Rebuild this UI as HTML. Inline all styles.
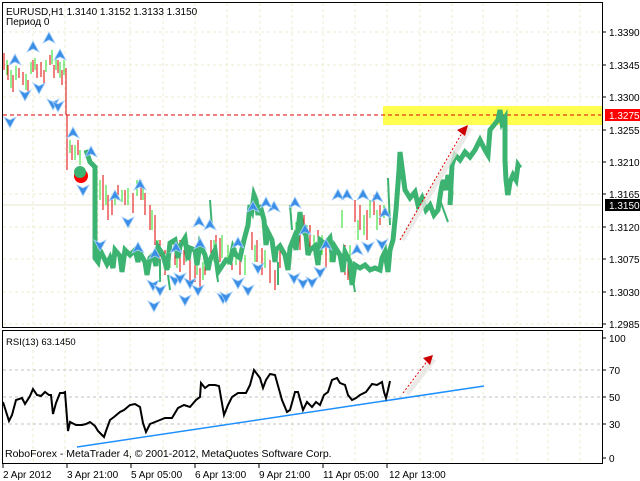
<!DOCTYPE html>
<html><head><meta charset="utf-8"><style>
html,body{margin:0;padding:0;background:#fff;width:640px;height:481px;overflow:hidden}
svg{display:block}
text{font-family:"Liberation Sans",sans-serif;font-size:10px;fill:#000}
</style></head><body>
<svg width="640" height="481" viewBox="0 0 640 481" xmlns="http://www.w3.org/2000/svg">
<defs>
<g id="up"><path d="M0,-6 L6,5 L0,2 L-6,5 Z" fill="#3a8ee6" stroke="#a8d0f8" stroke-width="0.8"/></g>
<g id="dn"><path d="M0,6 L6,-5 L0,-2 L-6,-5 Z" fill="#3a8ee6" stroke="#a8d0f8" stroke-width="0.8"/></g>
</defs>
<g stroke="#ecebd2" stroke-dasharray="3,3" stroke-width="1">
<path d="M33,3V327M65,3V327M98,3V327M130,3V327M163,3V327M195,3V327M227,3V327M260,3V327M292,3V327M323,3V327M355,3V327M387,3V327M420,3V327M452,3V327M483,3V327M517,3V327M548,3V327M580,3V327"/>
<path d="M3,32H601M3,65H601M3,97H601M3,130H601M3,162H601M3,194H601M3,227H601M3,259H601M3,292H601M3,324H601"/>
<path d="M33,332V463M65,332V463M98,332V463M130,332V463M163,332V463M195,332V463M227,332V463M260,332V463M292,332V463M323,332V463M355,332V463M387,332V463M420,332V463M452,332V463M483,332V463M517,332V463M548,332V463M580,332V463"/>
</g>
<g stroke="#c0c0c0" stroke-dasharray="3,3"><path d="M3,370H601M3,397H601M3,424H601"/></g>
<path d="M3,205H601" stroke="#e6e4cc"/>
<rect x="383" y="106" width="219" height="19" fill="#ffff50"/>
<path d="M3,115H601" stroke="#d00" stroke-dasharray="4,3"/>
<g stroke-width="1">
<path stroke="#e00000" d="M4,53V70M8,65V80M13,75V92M19,68V78M23,72V85M28,80V95M33,60V72M37,64V78M41,62V77M44,70V84M50,55V65M54,65V78M58,60V73M62,70V85M66,68V115M67,115V170M72,145V160M78,140V155M103,175V210M108,195V220M112,198V215M118,185V200M125,190V205M133,193V213M141,180V200M145,193V215M150,205V230M155,215V245M160,240V270M165,250V275M175,245V265M180,240V272M184,250V265M190,260V282M195,265V282M200,268V290M205,255V275M211,240V255M216,235V258M220,238V262M232,250V270M240,258V275M252,232V250M257,240V262M262,248V275M270,260V283M275,270V290M280,250V268M300,220V250M304,215V232M310,225V252M318,230V255M326,243V268M345,245V275M348,255V280M355,200V222M360,205V230M367,210V240M374,195V215M380,205V225"/>
<path stroke="#22dd22" d="M7,60V75M11,70V88M16,66V80M26,74V90M31,62V74M35,58V70M46,60V72M52,50V64M56,58V70M60,62V78M64,60V75M70,140V153M75,145V160M80,150V165M100,180V200M106,185V205M115,190V205M122,190V202M128,188V205M137,180V196M143,185V200M152,210V230M158,240V255M170,250V268M177,250V268M186,245V262M197,255V275M203,262V280M214,240V262M222,235V258M228,245V265M236,248V265M245,255V275M255,245V262M265,250V268M278,265V280M285,250V262M296,222V240M307,225V245M314,235V255M322,235V255M330,245V262M342,210V228M350,245V262M358,220V240M364,215V235M370,200V218M377,210V230M384,205V218"/>
</g>
<g fill="none" stroke="#3cb371" stroke-linejoin="miter" stroke-linecap="butt">
<path stroke-width="5" d="M86,150 L90,162 L95,167 L95,258 L98,262 L100,250 L103,256 L107,264 L110,258 L113,268 L115,250 L120,256 L122,272 L125,250 L130,255 L135,250 L138,262 L140,253 L145,262 L147,275 L150,258 L153,255 L156,266 L158,247 L163,255 L167,270 L170,243 L175,240 L178,258 L180,246 L185,238 L188,260 L190,248 L195,250 L197,265 L200,244 L205,255 L208,270 L210,260 L215,250 L218,272 L222,266 L226,260 L230,262 L233,248 L236,255 L240,258 L244,240 L248,225 L250,205 L252,210 L254,195 L256,200 L258,215 L260,205 L264,220 L266,245 L268,232 L272,240 L275,262 L276,250 L280,246 L285,255 L288,270 L290,248 L294,238 L296,250 L298,230 L300,212 L302,230 L306,235 L308,255 L310,250 L315,246 L318,265 L320,240 L325,244 L330,238 L333,262 L335,247 L340,255 L343,272 L345,252 L350,262 L352,285 L355,265 L360,268 L365,265 L370,270 L375,268 L380,270 L382,258 L385,252 L388,272 L390,250 L393,240 L396,210 L399,170 L400,152 L403,175 L405,190 L410,198 L415,192 L418,205 L422,198 L426,210 L430,205 L434,215 L438,210 L441,190 L443,180 L446,190 L448,175 L451,192 L450,205 L452,165 L455,155 L460,160 L465,152 L470,157 L475,150 L480,140 L485,150 L488,155 L490,130 L494,125 L498,120 L500,110 L502,123 L505,118 L505,160 L506,180 L508,195 L510,182 L513,175 L516,180 L518,165 L520,168"/>
<path stroke-width="2" d="M210,200 L212,228 M290,205 L292,230 M388,178 L390,225 M353,280 L355,292 M168,275 L170,290 M215,256 L218,282 M505,180 L506,195 M160,260 L160,282 M278,262 L278,285 M440,200 L448,222"/>
</g>
<g>
<use href="#up" x="49" y="38"/><use href="#up" x="33" y="47"/><use href="#up" x="15" y="60"/><use href="#up" x="60" y="55"/><use href="#up" x="73" y="133"/><use href="#up" x="91" y="152"/><use href="#up" x="140" y="185"/><use href="#up" x="115" y="196"/><use href="#up" x="199" y="222"/><use href="#up" x="210" y="225"/><use href="#up" x="253" y="207"/><use href="#up" x="274" y="207"/><use href="#up" x="295" y="203"/><use href="#up" x="305" y="230"/><use href="#up" x="338" y="195"/><use href="#up" x="347" y="195"/><use href="#up" x="377" y="197"/><use href="#up" x="363" y="195"/><use href="#up" x="385" y="213"/><use href="#up" x="200" y="244"/><use href="#up" x="238" y="243"/><use href="#up" x="266" y="203"/><use href="#up" x="326" y="245"/><use href="#up" x="357" y="250"/><use href="#up" x="138" y="248"/><use href="#up" x="155" y="254"/><use href="#up" x="176" y="248"/>
<use href="#dn" x="10" y="122"/><use href="#dn" x="25" y="95"/><use href="#dn" x="39" y="88"/><use href="#dn" x="53" y="104"/><use href="#dn" x="58" y="106"/><use href="#dn" x="83" y="190"/><use href="#dn" x="128" y="222"/><use href="#dn" x="100" y="245"/><use href="#dn" x="153" y="285"/><use href="#dn" x="160" y="290"/><use href="#dn" x="175" y="280"/><use href="#dn" x="190" y="283"/><use href="#dn" x="198" y="290"/><use href="#dn" x="223" y="298"/><use href="#dn" x="238" y="283"/><use href="#dn" x="248" y="290"/><use href="#dn" x="294" y="278"/><use href="#dn" x="303" y="283"/><use href="#dn" x="320" y="272"/><use href="#dn" x="185" y="300"/><use href="#dn" x="258" y="268"/><use href="#dn" x="312" y="282"/><use href="#dn" x="368" y="247"/><use href="#dn" x="382" y="244"/><use href="#dn" x="154" y="306"/><use href="#dn" x="226" y="297"/><use href="#dn" x="180" y="278"/>
</g>
<circle cx="81" cy="176" r="7" fill="#ff0000"/><circle cx="80" cy="172" r="6" fill="#3cb371"/>
<path d="M402,240 L470,128" stroke="#e8e6e0" stroke-width="5" opacity="0.8"/>
<path d="M400,240 L462,133" stroke="#d00" stroke-dasharray="2,2" stroke-width="1"/>
<path d="M468,125 L457,130 L465,136 Z" fill="#c00"/>
<path d="M407,394 L434,359" stroke="#e8e6e0" stroke-width="5" opacity="0.8"/>
<path d="M403,393 L428,360" stroke="#d00" stroke-dasharray="2,2"/>
<path d="M433,355 L423,358 L430,365 Z" fill="#c00"/>
<rect x="2.5" y="2.5" width="600" height="325" fill="none" stroke="#000"/>
<rect x="2.5" y="330.5" width="600" height="133" fill="none" stroke="#000"/>
<path d="M77,447 L484,386" stroke="#1e90ff" stroke-width="1.5" fill="none"/>
<path fill="none" stroke="#000" stroke-width="2" d="M3,402 L9,421 L12,415 L16,400 L22,398 L25,404 L30,396 L33,389 L37,395 L41,396 L45,392 L49,395 L51,395 L53,414 L56,403 L60,393 L63,393 L65,392 L68,431 L70,422 L76,425 L82,425 L86,424 L90,422 L95,426 L98,431 L102,435 L104,437 L106,431 L110,420 L114,417 L120,412 L124,410 L130,405 L135,404 L140,407 L143,423 L146,432 L150,424 L155,422 L160,420 L165,418 L172,418 L178,408 L184,405 L190,407 L196,400 L200,397 L201,383 L205,388 L209,385 L215,385 L219,386 L224,415 L228,405 L232,397 L238,393 L246,393 L250,385 L254,370 L260,378 L263,388 L266,380 L270,374 L275,375 L282,400 L287,412 L290,410 L295,392 L298,392 L303,410 L307,402 L312,407 L316,402 L320,405 L324,395 L328,392 L332,380 L337,378 L340,383 L345,385 L348,395 L352,400 L356,398 L360,395 L366,392 L372,384 L377,385 L382,382 L384,392 L386,398 L388,390 L390,381"/>
<text x="6" y="15">EURUSD,H1  1.3140 1.3152 1.3133 1.3150</text>
<text x="6" y="25">Период  0</text>
<text x="6" y="345" style="font-size:9.5px">RSI(13) 63.1450</text>
<text x="5" y="457" style="font-size:10.5px">RoboForex - MetaTrader 4, © 2001-2012, MetaQuotes Software Corp.</text>
<g stroke="#000"><path d="M603,32h3M603,65h3M603,97h3M603,130h3M603,162h3M603,194h3M603,227h3M603,259h3M603,292h3M603,324h3M603,338h3M603,370h3M603,397h3M603,424h3M603,458h3"/>
<path d="M3,464v4M67,464v4M131,464v4M195,464v4M259,464v4M323,464v4M387,464v4"/></g>
<g>
<text x="609" y="36">1.3390</text><text x="609" y="69">1.3345</text><text x="609" y="101">1.3300</text><text x="609" y="134">1.3255</text><text x="609" y="166">1.3210</text><text x="609" y="198">1.3165</text><text x="609" y="231">1.3120</text><text x="609" y="263">1.3075</text><text x="609" y="296">1.3030</text><text x="609" y="328">1.2985</text>
<rect x="605" y="109" width="35" height="12" fill="#ff0000"/><text x="609" y="119" style="fill:#fff">1.3275</text>
<rect x="605" y="199" width="35" height="12" fill="#000"/><text x="609" y="209" style="fill:#fff">1.3150</text>
<text x="609" y="342">100</text><text x="609" y="374">70</text><text x="609" y="401">50</text><text x="609" y="428">30</text><text x="609" y="462">0</text>
<text x="3" y="478">2 Apr 2012</text><text x="67" y="478">3 Apr 21:00</text><text x="131" y="478">5 Apr 05:00</text><text x="195" y="478">6 Apr 13:00</text><text x="259" y="478">9 Apr 21:00</text><text x="323" y="478">11 Apr 05:00</text><text x="389" y="478">12 Apr 13:00</text>
</g>
</svg>
</body></html>
